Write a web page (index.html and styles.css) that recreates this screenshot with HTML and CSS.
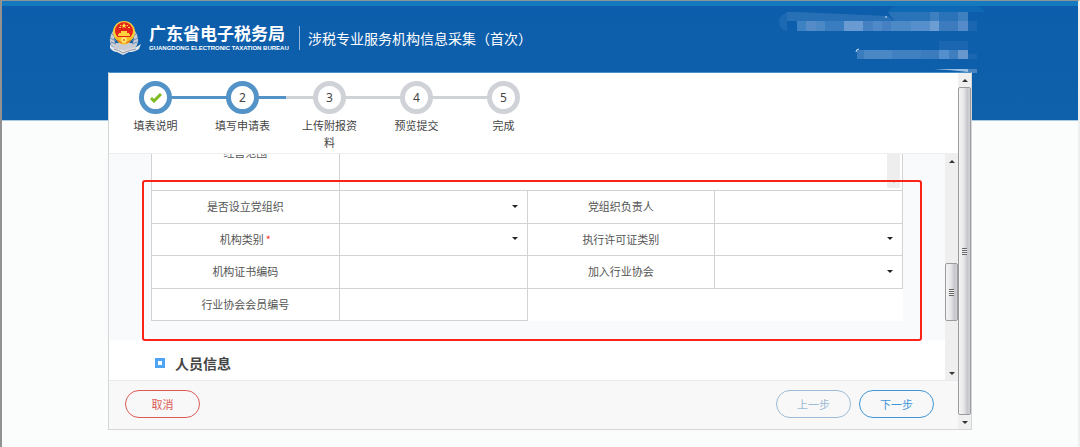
FILE: index.html
```html
<!DOCTYPE html>
<html lang="zh-CN">
<head>
    <meta charset="utf-8">
    <meta name="viewport" content="width=device-width">
    <title>涉税专业服务机构信息采集（首次）</title>
    <link rel="stylesheet" href="styles.css">
</head>
<body>
<div class="page">
    <header class="banner">
        <div class="brand">
            <svg class="emblem" viewBox="0 0 32 34" aria-hidden="true">
                <path d="M4 10Q-1 17 2 24L9 31L23 31L28 24Q31 17 26 10L24 22L6 22Z" fill="#c9ccd4"/>
                <path d="M3 13l4 3M1 17l6 3M2 21l5 2M27 13l-4 3M29 17l-6 3M28 21l-5 2" stroke="#6f89b0" stroke-width="1"/>
                <path d="M1 23Q4 28 10 28L15 30L20 28Q27 27 32 23L30 28Q26 31 20 31L14 34L8 31Q4 31 1 27Z" fill="#e6e7eb"/>
                <path d="M5 28Q10 29 14 32Q20 29 27 28" fill="none" stroke="#8e939f" stroke-width="1"/>
                <circle cx="15" cy="11" r="11" fill="#f8cf3a"/>
                <circle cx="15" cy="10" r="9" fill="#e2231a"/>
                <path d="M15 2l1 2h2l-2 1 1 2-2-1-2 1 1-2-2-1h2z" fill="#ffdf4a"/>
                <path d="M10 6h2v1h-2zM19 6h2v1h-2zM11 4h1v1h-1zM18 4h1v1h-1z" fill="#ffdf4a"/>
                <path d="M9 14l1-2h2v-2h6v2h2l1 2v1H9z" fill="#ffd23c"/>
                <path d="M6 16h18l-3 5q-6 5-12 0z" fill="#f9bd25"/>
                <circle cx="15" cy="19" r="3" fill="#ffe06a"/>
                <circle cx="15" cy="19" r="1" fill="#d8751a"/>
                <path d="M8 19l5 3M22 19l-5 3" stroke="#e0611c" stroke-width="1"/>
            </svg>
            <div class="names">
                <div class="name-cn">广东省电子税务局</div>
                <div class="name-en">GUANGDONG ELECTRONIC TAXATION BUREAU</div>
            </div>
            <h1 class="title">涉税专业服务机构信息采集（首次）</h1>
            <svg class="mosaic" viewBox="0 0 220 74" aria-hidden="true">
                <path d="M118 12Q120 6 130 6H205Q212 6 216 12Z" fill="#0e68b3"/>
                <path d="M17 12H27L118 16L124 22V31H27V21H17Z" fill="#2770b6"/>
                <path d="M17 12Q9 16 9 22Q9 30 17 31Z" fill="#1c69b3"/>
                <path d="M118 12H198V21H124Z" fill="#2b73b8"/>
                <path d="M160 12h9v9h-9zM188 12h10v9h-10z" fill="#3e7fc0"/>
                <path d="M27 21h9v10h-9z" fill="#3d83c3"/>
                <path d="M36 21h10v10H36z" fill="#558bc6"/>
                <path d="M46 21h9v10h-9z" fill="#4a88c6"/>
                <path d="M55 21h19v10H55z" fill="#397dc0"/>
                <path d="M74 21h19v10H74z" fill="#699ad1"/>
                <path d="M93 21h10v10H93zM112 21h9v10h-9z" fill="#4581c2"/>
                <path d="M103 21h9v10h-9z" fill="#5089c7"/>
                <path d="M121 21h20v10h-20z" fill="#4c89c7"/>
                <path d="M141 21h19v10h-19z" fill="#568fcb"/>
                <path d="M160 21h9v10h-9z" fill="#6c9dd3"/>
                <path d="M169 21h19v10h-19z" fill="#3c7bbd"/>
                <path d="M188 21h10v10h-10z" fill="#558bc8"/>
                <path d="M198 21h9v10h-9zM169 41h29v9h-29zM198 54h9v5h-9z" fill="#1a66b0"/>
                <path d="M87 50h7v9h-7z" fill="#3b7cbe"/>
                <path d="M94 50h28v9H94z" fill="#4a87c5"/>
                <path d="M122 50h29v9h-29z" fill="#4080c1"/>
                <path d="M151 50h18v9h-18z" fill="#3b7cbf"/>
                <path d="M169 50h10v9h-10z" fill="#548fcd"/>
                <path d="M179 50h9v9h-9z" fill="#3f7fbf"/>
                <path d="M188 50h10v9h-10z" fill="#6797cc"/>
                <path d="M86 52q0-3 3-3M115 17h2" fill="none" stroke="#d5e4f2" stroke-width="1"/>
                <path d="M164 69h34v3Q182 70 164 69Z" fill="#9cc0e2"/>
                <path d="M198 69h9v4h-9z" fill="#4984c2"/>
            </svg>
        </div>
    </header>

    <div class="panel">
        <div class="main">
            <ol class="steps">
                <li class="step done">
                    <span class="dot"><svg viewBox="0 0 12 10" aria-label="已完成"><path d="M1 5l3 3 7-7" fill="none" stroke="#7fba1e" stroke-width="3"/></svg></span>
                    <span class="step-name">填表说明</span>
                </li>
                <li class="step current">
                    <span class="dot">2</span>
                    <span class="step-name">填写申请表</span>
                </li>
                <li class="step">
                    <span class="dot">3</span>
                    <span class="step-name">上传附报资料</span>
                </li>
                <li class="step">
                    <span class="dot">4</span>
                    <span class="step-name">预览提交</span>
                </li>
                <li class="step">
                    <span class="dot">5</span>
                    <span class="step-name">完成</span>
                </li>
            </ol>

            <div class="body">
                <div class="content">
                    <section class="org">
                        <table class="form-table">
                            <colgroup>
                                <col>
                                <col>
                                <col>
                                <col>
                            </colgroup>
                            <tr class="scope-row">
                                <th><label for="scope">经营范围</label></th>
                                <td colspan="3">
                                    <div class="area">
                                        <textarea id="scope"></textarea>
                                        <div class="area-bar"><i class="arrow down"></i></div>
                                    </div>
                                </td>
                            </tr>
                            <tr>
                                <th><label for="party">是否设立党组织</label></th>
                                <td><div class="pick"><select id="party"></select></div></td>
                                <th><label for="leader">党组织负责人</label></th>
                                <td><input type="text" id="leader"></td>
                            </tr>
                            <tr>
                                <th><label for="kind">机构类别<span class="must">*</span></label></th>
                                <td><div class="pick"><select id="kind"></select></div></td>
                                <th><label for="licence">执行许可证类别</label></th>
                                <td><div class="pick"><select id="licence"></select></div></td>
                            </tr>
                            <tr>
                                <th><label for="cert">机构证书编码</label></th>
                                <td><input type="text" id="cert"></td>
                                <th><label for="assoc">加入行业协会</label></th>
                                <td><div class="pick"><select id="assoc"></select></div></td>
                            </tr>
                            <tr>
                                <th><label for="member">行业协会会员编号</label></th>
                                <td><input type="text" id="member"></td>
                                <td class="blank" colspan="2"></td>
                            </tr>
                        </table>
                        <div class="highlight"></div>
                    </section>
                    <h2 class="section-title">人员信息</h2>
                </div>
                <div class="scrollbar inner">
                    <i class="arrow up"></i>
                    <div class="gap-top"></div>
                    <div class="thumb"><i class="grip"></i></div>
                    <div class="gap-bottom"></div>
                    <i class="arrow down"></i>
                </div>
            </div>

            <footer class="actions">
                <button type="button" class="btn cancel">取消</button>
                <button type="button" class="btn prev">上一步</button>
                <button type="button" class="btn next">下一步</button>
            </footer>
        </div>
        <div class="scrollbar outer">
            <i class="arrow up"></i>
            <div class="thumb"><i class="grip"></i></div>
            <i class="arrow down"></i>
        </div>
    </div>
</div>
</body>
</html>
```

FILE: styles.css
```css
*, *::before, *::after { box-sizing: border-box; }

body {
    margin: 0;
    background: #fbfdfc;
    color: #444;
    font: 11px/17px "Noto Sans CJK SC", sans-serif;
}

.page {
    min-height: 100vh;
    border: 1px solid #eef0f0;
    border-top-color: #8e9499;
    border-width: 1px 2px;
    border-left-color: #929292;
}

/* blue banner */
.banner {
    height: 120px;
    border-top: 5px solid #1479bd;
    border-bottom: 1px solid #a9cbe6;
    background: linear-gradient(#0c5dab, #1061ab);
}

.brand {
    position: relative;
    display: flex;
    align-items: center;
    width: 80vw;
    height: 64px;
    margin: 0 auto;
    color: #fff;
}

.emblem {
    width: 32px;
    height: 34px;
    margin-left: 1px;
}

.names {
    width: 150px;
    margin-left: 8px;
    line-height: 1;
    white-space: nowrap;
}

.name-cn {
    font-size: 17px;
    font-weight: bold;
    line-height: 20px;
}

.name-en {
    font: bold 6px/10px "Liberation Sans", sans-serif;
}

.title {
    margin: 0;
    padding-left: 8px;
    border-left: 1px solid #8db5dc;
    font-size: 14px;
    font-weight: normal;
    line-height: 24px;
}

.mosaic {
    position: absolute;
    top: -6px;
    right: -18px;
    width: 220px;
    height: 74px;
}

/* panel */
.panel {
    display: flex;
    width: 80vw;
    margin: -49px auto 17px;
    position: relative;
    border: 1px solid #d4d6d8;
    border-top-color: #4d8fca;
    background: #fff;
}

.main { flex: 1; min-width: 0; }

/* steps */
.steps {
    display: flex;
    height: 81px;
    margin: 0;
    padding: 8px 0 0 3px;
    border-bottom: 1px solid #eee;
    list-style: none;
}

.step {
    position: relative;
    width: 87px;
    padding: 0 14px;
    text-align: center;
}

.step::before {
    content: "";
    position: absolute;
    top: 15px;
    left: 0;
    width: 100%;
    height: 3px;
    background: #cfd2d7;
}

.step:first-child::before { left: 50%; width: 50%; }
.step:last-child::before { width: 50%; }
.step.done::before, .step.current::before { background: #5393c7; }

.dot {
    position: relative;
    display: flex;
    align-items: center;
    justify-content: center;
    width: 33px;
    height: 33px;
    margin: 0 auto 3px;
    border: 5px solid #cfd2d7;
    border-radius: 50%;
    background: #fff;
    font: 12px/16px "Noto Sans", sans-serif;
}

.done .dot, .current .dot { border-color: #5393c7; }
.dot svg { width: 12px; height: 10px; }
.step-name { display: block; }

/* scrolled form */
.body {
    display: flex;
    height: calc(100vh - 221px);
    min-height: 226px;
}

.content {
    flex: 1;
    min-width: 0;
    overflow: hidden;
}

.org {
    position: relative;
    display: flow-root;
    padding: 0 42px 19px;
    background: #f9fafc;
}

.form-table {
    width: 100%;
    height: 208px;
    margin-top: -41px;
    border-collapse: collapse;
    table-layout: fixed;
    background: #fff;
}

.form-table col { width: 25%; }

.form-table th, .form-table td {
    padding: 0;
    border: 1px solid #d3d3d3;
    font-weight: normal;
    color: #555;
}

.scope-row { height: 77px; }
.form-table .blank { border-right: 0; border-bottom: 0; }
.must { margin-left: 2px; color: #f33; }

.form-table input, .form-table select, .form-table textarea {
    display: block;
    width: 100%;
    height: 30px;
    padding: 0 8px;
    border: 0;
    outline: 0;
    background: none;
    font: inherit;
    appearance: none;
    resize: none;
}

.pick { position: relative; }

.pick::after {
    content: "";
    position: absolute;
    top: 13px;
    right: 9px;
    border: 3px solid transparent;
    border-top-color: #222;
    border-bottom: 0;
    pointer-events: none;
}

.area { display: flex; padding-right: 2px; }
.form-table .area textarea { flex: 1; height: 72px; }

.area-bar {
    display: flex;
    align-items: flex-end;
    width: 13px;
    background: #eee;
}

.area-bar .arrow { opacity: .3; }

.highlight {
    position: absolute;
    top: 26px;
    right: 23px;
    bottom: -1px;
    left: 33px;
    border: 2px solid #fb2318;
    border-radius: 3px;
    pointer-events: none;
}

.section-title {
    display: flex;
    align-items: center;
    gap: 10px;
    margin: 0;
    padding: 13px 46px 0;
    font-size: 14px;
    line-height: 20px;
}

.section-title::before {
    content: "";
    width: 10px;
    height: 10px;
    border: 3px solid #4fa5f5;
}

/* scrollbars */
.scrollbar {
    display: flex;
    flex-direction: column;
    width: 13px;
    background: #efefef;
}

.arrow {
    display: flex;
    align-items: center;
    justify-content: center;
    width: 13px;
    height: 14px;
}

.arrow::before {
    content: "";
    border: 3px solid transparent;
}

.arrow.up::before { border-top: 0; border-bottom-color: #333; }
.arrow.down::before { border-bottom: 0; border-top-color: #333; }

.thumb {
    display: flex;
    align-items: center;
    justify-content: center;
    border: 1px solid #9b9b9f;
    border-radius: 2px;
    background: linear-gradient(90deg, #f5f5f5, #e6e6e8 45%, #c6c7cd 75%, #d3d3d6);
}

.inner .thumb { height: 58px; }
.outer .thumb { flex: 1; }
.gap-top { flex: 17; }
.gap-bottom { flex: 8; }

.grip {
    width: 5px;
    height: 7px;
    background: repeating-linear-gradient(#666 0, #666 1px, #eee 1px, #eee 2px);
}

/* bottom buttons */
.actions {
    display: flex;
    align-items: center;
    gap: 8px;
    height: 49px;
    padding: 0 24px 2px 16px;
    border-top: 1px solid #e8ecf0;
    background: #f8f8f8;
}

.btn {
    width: 75px;
    height: 28px;
    padding: 0;
    border: 1px solid;
    border-radius: 14px;
    background: none;
    font: inherit;
}

.cancel { margin-right: auto; color: #dc5a55; }
.prev { color: #9dbbd4; }
.next { color: #3f97d6; }
```
